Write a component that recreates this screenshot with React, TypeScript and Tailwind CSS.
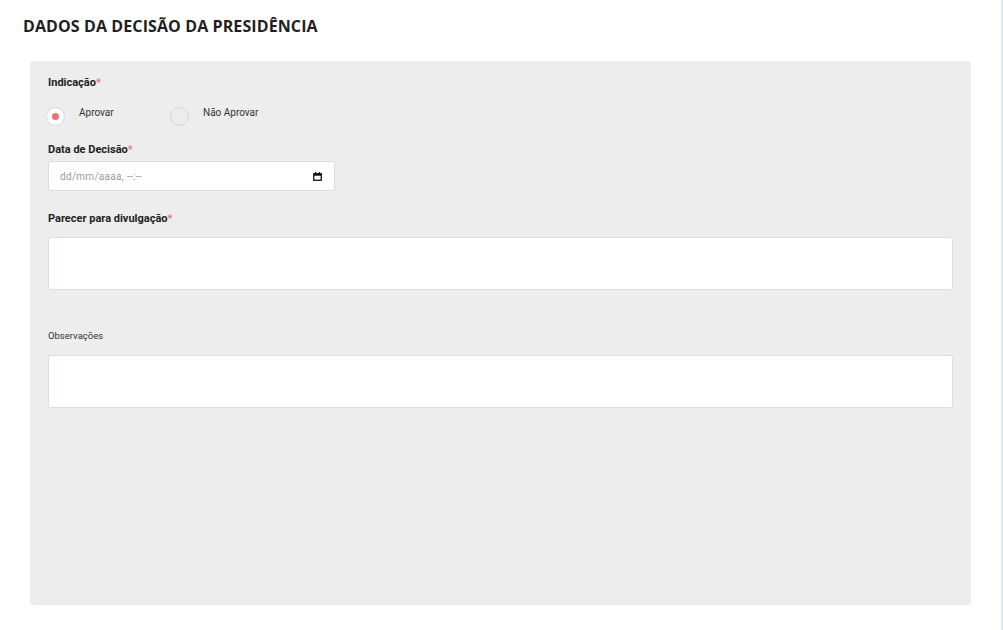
import { useState } from "react";

function Label({ text, required }: { text: string; required?: boolean }) {
  return (
    <div className="text-[11px] leading-[14px] font-bold text-[#222]">
      {text}
      {required && <span className="text-[#f87171]">*</span>}
    </div>
  );
}

export default function App() {
  const [choice, setChoice] = useState("aprovar");

  const options = [
    { id: "aprovar", label: "Aprovar" },
    { id: "nao", label: "Não Aprovar" },
  ];

  return (
    <div className="w-[1003px] h-[630px] bg-white border-r-2 border-[#e3e7ef] font-['Roboto',sans-serif]">
      <h1 className="pt-[15px] pl-[23px] text-[16px] leading-[22px] tracking-[0.1px] font-bold text-[#1f1f1f] font-['Open_Sans',sans-serif]">
        DADOS DA DECISÃO DA PRESIDÊNCIA
      </h1>

      <div className="mx-[30px] mt-[24px] h-[544px] rounded-[4px] bg-[#ededed] px-[18px] pt-[15px]">
        <Label text="Indicação" required />

        {/* radios */}
        <div className="flex mt-[17px]">
          {options.map(o => (
            <button
              key={o.id}
              onClick={() => setChoice(o.id)}
              className="flex items-start w-[126px] -ml-[2px] first:ml-[-2px]"
            >
              <span
                className={
                  "w-[19px] h-[19px] rounded-full border border-[#cfd6e6] flex items-center justify-center " +
                  (choice === o.id ? "bg-white" : "bg-transparent")
                }
              >
                {choice === o.id && <span className="w-[7px] h-[7px] rounded-full bg-[#f26d74]" />}
              </span>
              <span className="ml-[14px] -mt-[1px] text-[10px] leading-[14px] text-[#333]">{o.label}</span>
            </button>
          ))}
        </div>

        <div className="mt-[17px]">
          <Label text="Data de Decisão" required />
        </div>
        <div className="mt-[4px] w-[287px] h-[30px] bg-white border border-[#d7deec] rounded-[2px] flex items-center justify-between pl-[11px] pr-[12px]">
          <span className="text-[10px] text-[#9a9a9a] tracking-[0.3px]">dd/mm/aaaa, --:--</span>
          <svg width="9" height="9" viewBox="0 0 9 9">
            <rect x="0.75" y="1.75" width="7.5" height="6.5" fill="none" stroke="#111" strokeWidth="1.3" />
            <rect x="0.75" y="1.75" width="7.5" height="2" fill="#111" />
            <rect x="2" y="0" width="1.2" height="2" fill="#111" />
            <rect x="5.8" y="0" width="1.2" height="2" fill="#111" />
          </svg>
        </div>

        <div className="mt-[21px]">
          <Label text="Parecer para divulgação" required />
        </div>
        <textarea className="mt-[11px] block w-full h-[53px] bg-white border border-[#d7deec] rounded-[2px] resize-none outline-none" />

        <div className="mt-[39px] text-[9.5px] leading-[13px] text-[#333]">Observações</div>
        <textarea className="mt-[13px] block w-full h-[53px] bg-white border border-[#d7deec] rounded-[2px] resize-none outline-none" />
      </div>
    </div>
  );
}
